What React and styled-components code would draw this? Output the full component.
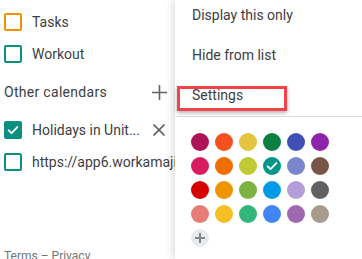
import React from 'react'
import styled, { createGlobalStyle } from 'styled-components'

const GlobalStyle = createGlobalStyle`
    html, body {
        margin: 0;
        padding: 0;
        background: #fff;
        font-family: Roboto, "Liberation Sans", sans-serif;
        overflow: hidden;
    }
`

const calendars = [
    { name: 'Tasks', color: '#f09300' },
    { name: 'Workout', color: '#0b8f80' },
]

const others = [
    { name: 'Holidays in Unit...', color: '#0b8f80', checked: true, remove: true },
    { name: 'https://app6.workamajig.com', color: '#0b8f80' },
]

const palette = [
    '#ad1457', '#f4511e', '#e4c441', '#0b8043', '#3f51b5', '#8e24aa',
    '#d81b60', '#ef6c00', '#c0ca33', '#009688', '#7986cb', '#795548',
    '#d50000', '#f09300', '#7cb342', '#039be5', '#b39ddb', '#616161',
    '#e67c73', '#f6bf26', '#33b679', '#4285f4', '#9e69af', '#a79b8e',
]

const Check = () => (
    <svg width="14" height="14" viewBox="0 0 24 24">
        <path d="M4.5 12.5l5 5 10-10.5" fill="none" stroke="#fff" strokeWidth="3.2" strokeLinecap="round" strokeLinejoin="round" />
    </svg>
)

const App = () => {
    return (
        <Pagina>
            <GlobalStyle />
            <Sidebar>
                <Lista>
                    {calendars.map(c => (
                        <Fila key={c.name}>
                            <Casilla color={c.color} />
                            <Nombre>{c.name}</Nombre>
                        </Fila>
                    ))}
                </Lista>
                <Cabecera>
                    <Titulo>Other calendars</Titulo>
                    <Icono>
                        <svg width="15" height="15" viewBox="0 0 15 15">
                            <path d="M7.5 0v15M0 7.5h15" stroke="#5f6368" strokeWidth="1.6" />
                        </svg>
                    </Icono>
                </Cabecera>
                <Lista>
                    {others.map(c => (
                        <Fila key={c.name}>
                            <Casilla color={c.color} checked={c.checked}>
                                {c.checked && <Check />}
                            </Casilla>
                            <Nombre>{c.name}</Nombre>
                            {c.remove && (
                                <Icono>
                                    <svg width="12" height="12" viewBox="0 0 12 12">
                                        <path d="M0.5 0.5l11 11M11.5 0.5l-11 11" stroke="#5f6368" strokeWidth="1.6" />
                                    </svg>
                                </Icono>
                            )}
                        </Fila>
                    ))}
                </Lista>
                <Pie>Terms – Privacy</Pie>
            </Sidebar>
            <Menu>
                <Opciones>
                    <Opcion>Display this only</Opcion>
                    <Opcion>Hide from list</Opcion>
                    <Opcion>
                        Settings
                        <Resaltado />
                    </Opcion>
                </Opciones>
                <Separador />
                <Paleta>
                    {palette.map(color => (
                        <Color key={color} color={color}>
                            {color === '#009688' && <Check />}
                        </Color>
                    ))}
                    <Color color="#e8eaed">
                        <svg width="12" height="12" viewBox="0 0 12 12">
                            <path d="M6 1v10M1 6h10" stroke="#80868b" strokeWidth="2" />
                        </svg>
                    </Color>
                </Paleta>
            </Menu>
        </Pagina>
    )
}

const Pagina = styled.div`
    display: flex;
    width: 362px;
    height: 259px;
    overflow: hidden;
`

const Sidebar = styled.div`
    width: 175px;
    flex-shrink: 0;
    height: 259px;
    padding: 6px 0 0 4px;
    box-sizing: border-box;
    display: flex;
    flex-direction: column;
    overflow: hidden;
    white-space: nowrap;
`

const Lista = styled.div`
    display: flex;
    flex-direction: column;
`

const Fila = styled.div`
    display: flex;
    align-items: center;
    height: 32px;
`

const Casilla = styled.span`
    width: 18px;
    height: 18px;
    box-sizing: border-box;
    border: 2px solid ${props => props.color};
    border-radius: 2px;
    background: ${props => props.checked ? props.color : 'transparent'};
    display: flex;
    align-items: center;
    justify-content: center;
    flex-shrink: 0;
`

const Nombre = styled.span`
    margin-left: 10px;
    font-size: 14px;
    color: #3c4043;
    flex: 1;
`

const Cabecera = styled.div`
    display: flex;
    align-items: center;
    height: 44px;
`

const Titulo = styled.span`
    flex: 1;
    font-size: 14px;
    color: #3c4043;
    letter-spacing: 0.3px;
`

const Icono = styled.span`
    width: 24px;
    margin-right: 4px;
    display: flex;
    align-items: center;
    justify-content: center;
`

const Pie = styled.div`
    margin-top: auto;
    height: 9px;
    line-height: 12px;
    font-size: 12px;
    color: #70757a;
`

const Menu = styled.div`
    flex: 1;
    position: relative;
    z-index: 1;
    background: #fff;
    box-shadow: -2px 0 8px rgba(0, 0, 0, 0.15);
    display: flex;
    flex-direction: column;
`

const Opciones = styled.div`
    display: flex;
    flex-direction: column;
    gap: 10px;
`

const Opcion = styled.div`
    position: relative;
    height: 30px;
    display: flex;
    align-items: center;
    padding-left: 17px;
    font-size: 14px;
    color: #3c4043;
`

const Resaltado = styled.span`
    position: absolute;
    left: 2px;
    top: 6px;
    width: 110px;
    height: 25px;
    box-sizing: border-box;
    border: 3px solid #f0464a;
    box-shadow: 0 2px 4px rgba(0, 0, 0, 0.3);
`

const Separador = styled.div`
    margin-top: 6px;
    height: 1px;
    background: #dadce0;
`

const Paleta = styled.div`
    display: grid;
    grid-template-columns: repeat(6, 18px);
    gap: 6px;
    padding: 16px 0 0 16px;
`

const Color = styled.span`
    width: 18px;
    height: 18px;
    border-radius: 50%;
    background: ${props => props.color};
    display: flex;
    align-items: center;
    justify-content: center;
`

export default App
